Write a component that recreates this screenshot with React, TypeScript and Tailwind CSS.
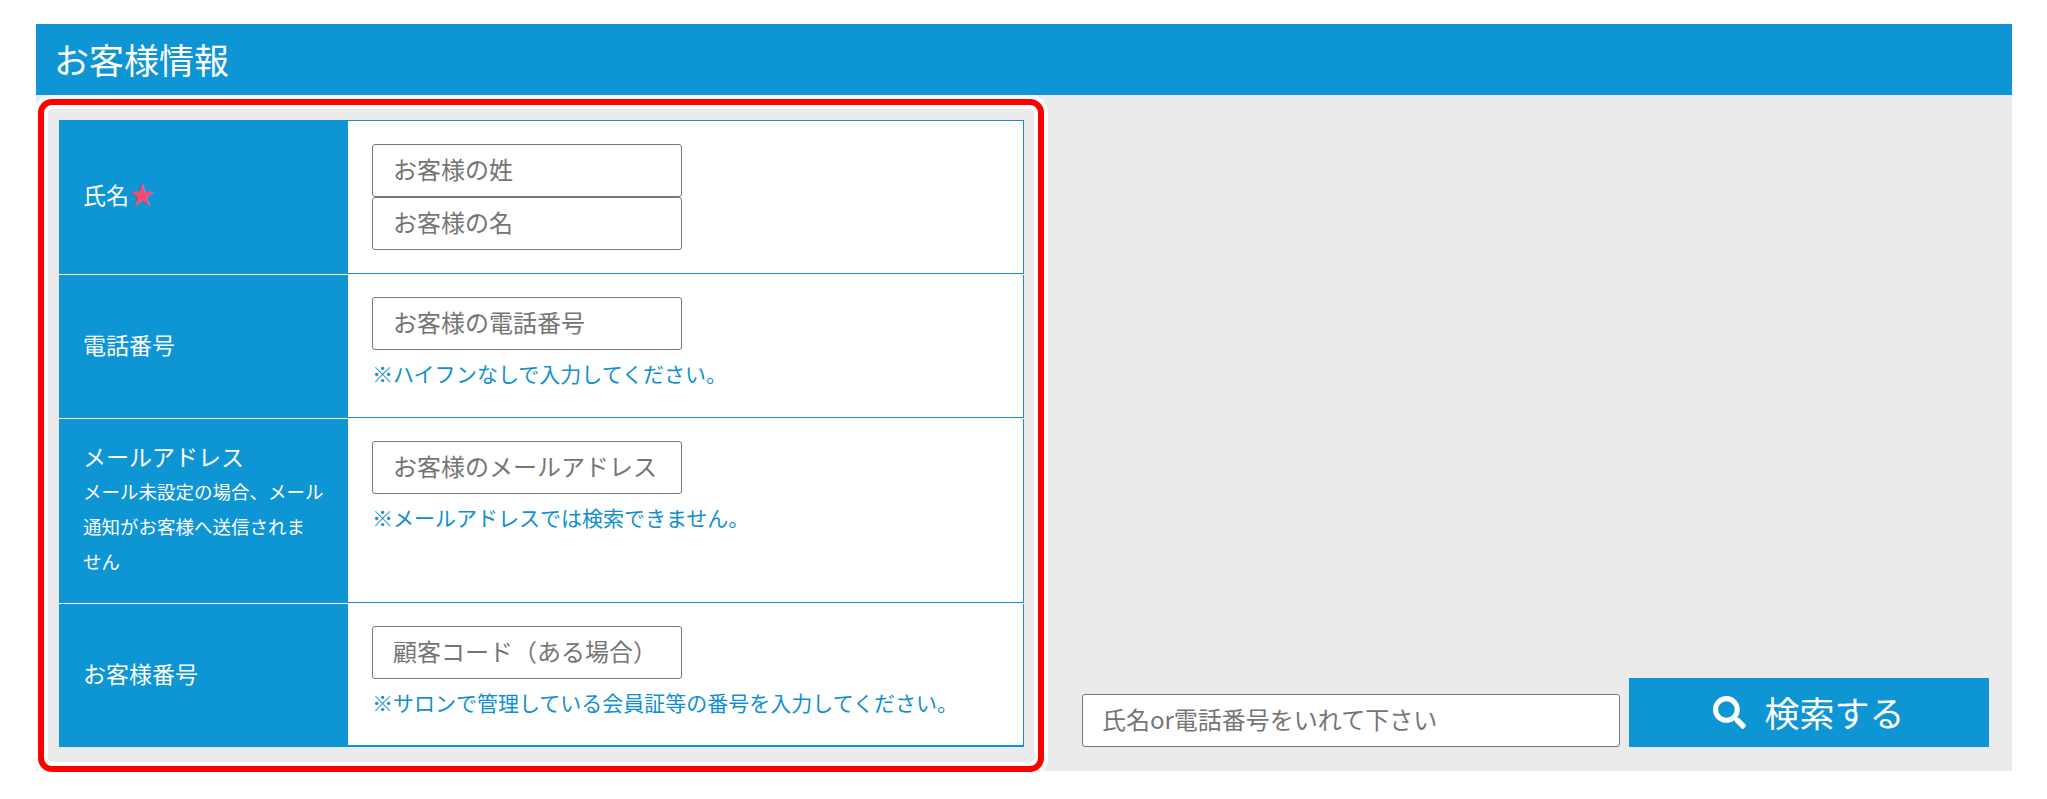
import { FaSearch } from 'react-icons/fa'

const inputClass =
  'block w-[310px] h-[53px] bg-white border border-[#767676] rounded-[3px] pl-[20px] pb-[4px] text-[24px] outline-none placeholder:text-[#757575]'

function Note({ children }: { children: string }) {
  return <p className="mt-[6px] text-[21px] leading-[35px] text-[#0e8fcf]">{children}</p>
}

function Row({
  label,
  height,
  first,
  last,
  children,
}: {
  label: React.ReactNode
  height: string
  first?: boolean
  last?: boolean
  children: React.ReactNode
}) {
  return (
    <div className={`flex bg-white ${height}`}>
      <div
        className={`w-[289px] shrink-0 flex items-center pl-[24px] pb-[5px] bg-[#0e95d4] text-white text-[23px] leading-[35px] ${
          last ? '' : 'border-b border-white'
        }`}
      >
        <div>{label}</div>
      </div>
      <div
        className={`flex-1 pl-[24px] border-r border-[#1f8ac6] ${first ? 'border-t pt-[23px]' : 'pt-[22px]'} ${
          last ? 'border-b-2 border-b-[#0e95d4]' : 'border-b mb-[1px]'
        }`}
      >
        {children}
      </div>
    </div>
  )
}

export default function App() {
  return (
    <div className="min-h-screen bg-white pl-[36px] pr-[35px] pt-[24px] font-['Noto_Sans_CJK_JP','Noto_Sans',sans-serif]">
      <h1 className="h-[71px] pl-[18px] flex items-center bg-[#0e95d4] text-white text-[35px] font-normal">
        お客様情報
      </h1>

      <div className="flex h-[676px] bg-[#ebebeb]">
        <div className="w-[1006px] h-[673px] ml-[2px] mt-[4px] shrink-0 border-[6px] border-[#ff0000] rounded-[14px] pt-[15px] pl-[15px] pr-[14px] shadow-[0_0_0_4px_#fff,inset_0_0_0_4px_#fff]">
          <Row
            first
            height="h-[155px]"
            label={
              <>
                氏名<span className="text-[#f44b72] text-[26px] leading-none">★</span>
              </>
            }
          >
            <input className={inputClass} placeholder="お客様の姓" />
            <input className={inputClass} placeholder="お客様の名" />
          </Row>

          <Row height="h-[144px]" label="電話番号">
            <input className={inputClass} placeholder="お客様の電話番号" />
            <Note>※ハイフンなしで入力してください。</Note>
          </Row>

          <Row
            height="h-[185px]"
            label={
              <>
                メールアドレス
                <span className="block text-[18.5px]">
                  メール未設定の場合、メール
                  <br />
                  通知がお客様へ送信されま
                  <br />
                  せん
                </span>
              </>
            }
          >
            <input className={inputClass} placeholder="お客様のメールアドレス" />
            <Note>※メールアドレスでは検索できません。</Note>
          </Row>

          <Row last height="h-[143px]" label="お客様番号">
            <input className={inputClass} placeholder="顧客コード（ある場合）" />
            <Note>※サロンで管理している会員証等の番号を入力してください。</Note>
          </Row>
        </div>

        <div className="flex-1 flex items-end gap-[9px] pl-[38px] pr-[23px] pb-[24px]">
          <input
            className="w-[538px] h-[53px] bg-white border border-[#767676] rounded-[3px] pl-[19px] pb-[5px] text-[24px] outline-none placeholder:text-[#757575]"
            placeholder="氏名or電話番号をいれて下さい"
          />
          <button className="flex-1 h-[69px] flex items-center justify-center gap-[18px] bg-[#0e95d4] text-white text-[35px]">
            <FaSearch size={33} />
            検索する
          </button>
        </div>
      </div>
    </div>
  )
}
